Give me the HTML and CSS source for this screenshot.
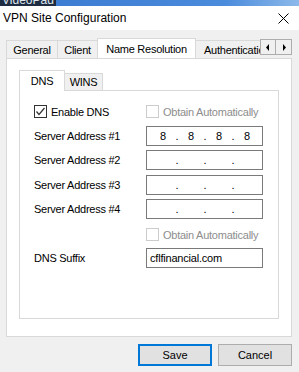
FILE: index.html
```html
<!DOCTYPE html>
<html lang="en">

<head>
  <meta charset="UTF-8">
  <title>VPN Site Configuration</title>
  <link rel="stylesheet" href="styles.css">
</head>

<body>
  <!-- parent window caption peeking out above the dialog -->
  <div class="topstrip"><span class="app-name">VideoPad</span></div>

  <div class="titlebar">
    <span class="title">VPN Site Configuration</span>
    <svg class="close" width="11" height="11" viewBox="0 0 11 11">
      <path d="M0.5 0.5 L10.5 10.5 M10.5 0.5 L0.5 10.5" stroke="#000" stroke-width="1" fill="none" />
    </svg>
  </div>

  <div class="dialog">
    <div class="tabrow">
      <div class="tabs">
        <div class="tab tab-general">General</div>
        <div class="tab tab-client">Client</div>
        <div class="tab tab-names active">Name Resolution</div>
        <div class="tab tab-auth">Authentication</div>
      </div>
      <div class="scroller">
        <span class="scroll-btn">
          <svg width="4" height="7" viewBox="0 0 4 7"><path d="M3 0 L3 7 L0 3.5 Z" fill="#000" /></svg>
        </span>
        <span class="scroll-btn">
          <svg width="4" height="7" viewBox="0 0 4 7"><path d="M1 0 L1 7 L4 3.5 Z" fill="#000" /></svg>
        </span>
      </div>
    </div>

    <div class="panel">
      <div class="subtabs">
        <div class="subtab sub-dns active">DNS</div>
        <div class="subtab sub-wins">WINS</div>
      </div>

      <div class="subpanel">
        <div class="row row-check">
          <label class="checkline">
            <span class="check">
              <svg width="11" height="11" viewBox="0 0 11 11">
                <path d="M1.5 5.5 L4 8.5 L9.5 2" stroke="#333" stroke-width="1.2" fill="none" />
              </svg>
            </span>
            Enable DNS
          </label>
          <label class="checkline disabled">
            <span class="check"></span>
            Obtain Automatically
          </label>
        </div>

        <div class="row row-ip first">
          <span>Server Address #1</span>
          <div class="ipbox">
            <span class="octet">8</span><span class="dot">.</span>
            <span class="octet">8</span><span class="dot">.</span>
            <span class="octet">8</span><span class="dot">.</span>
            <span class="octet">8</span>
          </div>
        </div>

        <div class="row row-ip">
          <span>Server Address #2</span>
          <div class="ipbox">
            <span class="octet"></span><span class="dot">.</span>
            <span class="octet"></span><span class="dot">.</span>
            <span class="octet"></span><span class="dot">.</span>
            <span class="octet"></span>
          </div>
        </div>

        <div class="row row-ip wide">
          <span>Server Address #3</span>
          <div class="ipbox">
            <span class="octet"></span><span class="dot">.</span>
            <span class="octet"></span><span class="dot">.</span>
            <span class="octet"></span><span class="dot">.</span>
            <span class="octet"></span>
          </div>
        </div>

        <div class="row row-ip">
          <span>Server Address #4</span>
          <div class="ipbox">
            <span class="octet"></span><span class="dot">.</span>
            <span class="octet"></span><span class="dot">.</span>
            <span class="octet"></span><span class="dot">.</span>
            <span class="octet"></span>
          </div>
        </div>

        <div class="row row-check second">
          <span></span>
          <label class="checkline disabled">
            <span class="check"></span>
            Obtain Automatically
          </label>
        </div>

        <div class="row row-suffix">
          <span>DNS Suffix</span>
          <div class="textbox">cflfinancial.com</div>
        </div>
      </div>
    </div>

    <div class="buttons">
      <button class="btn default">Save</button>
      <button class="btn">Cancel</button>
    </div>
  </div>
</body>

</html>
```

FILE: styles.css
```css
body {
  margin: 0;
  width: 299px;
  height: 372px;
  overflow: hidden;
  background: #f0f0f0;
  font-family: "Liberation Sans", Arial, sans-serif;
  font-size: 11px;
  letter-spacing: -0.25px;
  color: #000;
}

/* caption of the window behind, only its bottom edge shows */
.topstrip {
  height: 6px;
  overflow: hidden;
  background: linear-gradient(to right, #3878cf, #4a8bdc 75%, #8cb9ea);
}

.app-name {
  display: block;
  width: 56px;
  height: 6px;
  overflow: hidden;
  background: #1e2c42;
  color: #dfe6ee;
  font-size: 12px;
  line-height: 0;
  text-indent: 2px;
  letter-spacing: 0;
}

.titlebar {
  height: 24px;
  background: #fff;
  display: flex;
  align-items: center;
  justify-content: space-between;
  padding: 0 10px 0 3px;
}

.title {
  font-size: 12px;
  letter-spacing: 0;
}

.dialog {
  padding: 8px 7px 0 6px;
}

/* outer tabs */
.tabrow {
  display: flex;
  height: 20px;
}

.tabs {
  width: 254px;
  overflow: hidden;
  display: flex;
  align-items: flex-end;
}

.tab {
  flex: none;
  box-sizing: border-box;
  height: 18px;
  line-height: 18px;
  border: 1px solid #d9d9d9;
  border-bottom: none;
  border-right: none;
  background: #f0f0f0;
  text-align: center;
  white-space: nowrap;
}

.tab-general { width: 51px; }
.tab-client { width: 40px; }
.tab-names { width: 99px; }
.tab-auth { width: 80px; text-align: left; padding-left: 8px; }

.tab.active {
  height: 21px;
  margin-bottom: -1px;
  line-height: 20px;
  background: #fff;
  border-right: 1px solid #d9d9d9;
  position: relative;
  z-index: 1;
}

.tab.active + .tab {
  border-left: none;
}

.scroller {
  display: flex;
  margin-top: 1px;
}

.scroll-btn {
  box-sizing: border-box;
  width: 16px;
  height: 16px;
  border: 1px solid #adadad;
  background: #f0f0f0;
  display: flex;
  align-items: center;
  justify-content: center;
}

.scroll-btn + .scroll-btn {
  border-left: none;
}

.panel {
  box-sizing: border-box;
  height: 279px;
  background: #fff;
  border: 1px solid #d9d9d9;
  padding: 11px 12px 17px 12px;
}

/* DNS / WINS tabs */
.subtabs {
  display: flex;
  align-items: flex-end;
  height: 20px;
}

.subtab {
  box-sizing: border-box;
  height: 17px;
  line-height: 16px;
  border: 1px solid #d9d9d9;
  border-bottom: none;
  background: #f0f0f0;
  text-align: center;
}

.sub-dns { width: 46px; }
.sub-wins { width: 38px; border-left: none; }

.subtab.active {
  height: 21px;
  margin-bottom: -1px;
  line-height: 20px;
  background: #fff;
  position: relative;
  z-index: 1;
}

.subpanel {
  box-sizing: border-box;
  height: 229px;
  border: 1px solid #d9d9d9;
  padding: 14px 0 0 14px;
}

.row {
  display: grid;
  grid-template-columns: 112px 117px;
  align-items: center;
}

.row-check { height: 13px; }
.row-check.second { margin-top: 9px; }
.row-ip { height: 20px; margin-top: 4px; }
.row-ip.first { margin-top: 8px; }
.row-ip.wide { margin-top: 5px; }
.row-suffix { height: 20px; margin-top: 7px; }

.checkline {
  display: flex;
  align-items: center;
  gap: 4px;
  white-space: nowrap;
}

.check {
  box-sizing: border-box;
  width: 13px;
  height: 13px;
  border: 1px solid #333;
  background: #fff;
  display: flex;
  align-items: center;
  justify-content: center;
}

.checkline.disabled {
  color: #8d8d8d;
}

.checkline.disabled .check {
  border-color: #cccccc;
}

.ipbox,
.textbox {
  box-sizing: border-box;
  height: 20px;
  border: 1px solid #7a7a7a;
  background: #fff;
}

.ipbox {
  display: flex;
  align-items: center;
  padding-left: 5px;
}

.octet {
  width: 22px;
  text-align: center;
}

.dot {
  width: 6px;
  text-align: center;
}

.textbox {
  line-height: 18px;
  padding-left: 3px;
  letter-spacing: -0.2px;
}

.buttons {
  display: flex;
  justify-content: flex-end;
  gap: 6px;
  margin-top: 7px;
}

.btn {
  box-sizing: border-box;
  width: 74px;
  height: 22px;
  margin: 0;
  border: 1px solid #adadad;
  background: #e1e1e1;
  font-family: "Liberation Sans", Arial, sans-serif;
  font-size: 11px;
  letter-spacing: 0;
  color: #000;
  padding: 0;
}

.btn.default {
  border: 2px solid #0078d7;
}
```
